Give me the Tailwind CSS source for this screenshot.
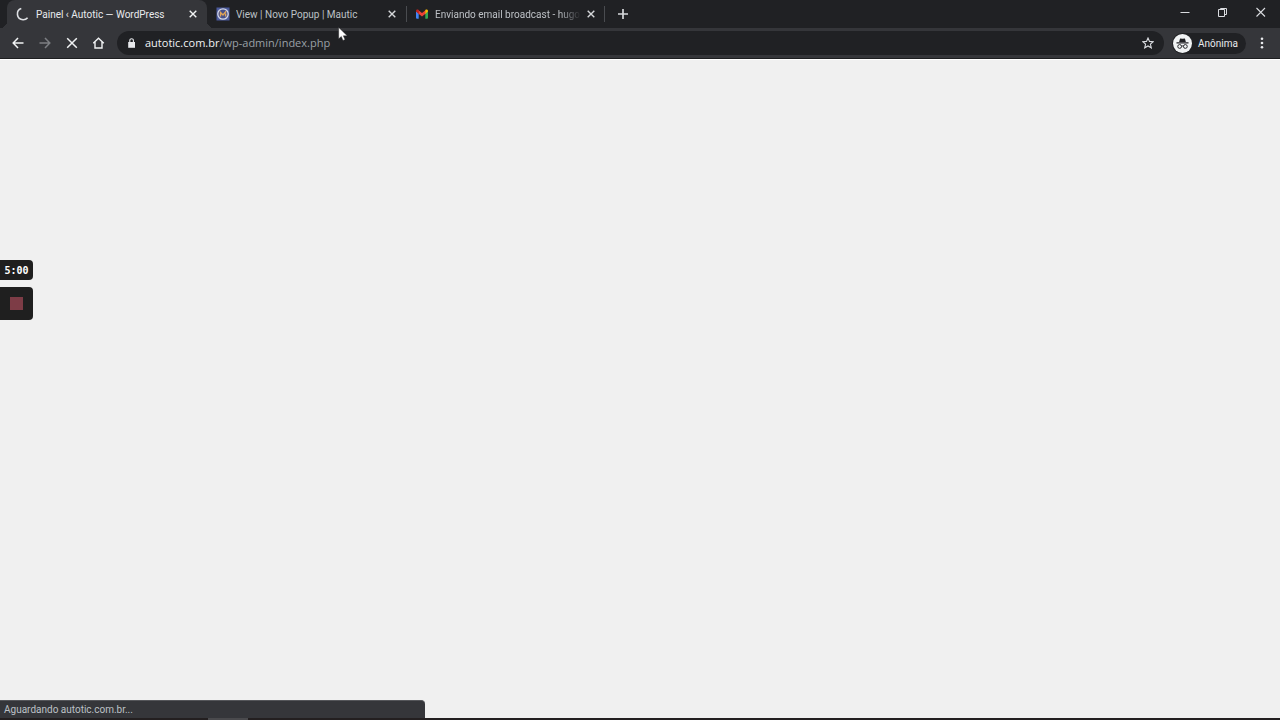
<!DOCTYPE html>
<html lang="pt-BR">
<head>
    <meta charset="UTF-8">
    <meta name="viewport" content="width=device-width, initial-scale=1.0">
    <title>Painel ‹ Autotic — WordPress</title>
    <script src="https://cdn.jsdelivr.net/npm/@tailwindcss/browser@4"></script>
</head>
<body class="relative flex h-screen flex-col overflow-hidden bg-[#f0f0f0] font-['Roboto',sans-serif] text-[10px] text-[#e8eaed]">

    <!-- Tab strip -->
    <header class="flex h-7 shrink-0 items-stretch bg-[#202124]">
        <nav class="flex pl-[7px]" aria-label="Guias">
            <div class="relative flex w-[200px] items-center rounded-t-lg bg-[#35363a] pr-2 pl-2">
                <span class="absolute bottom-0 -left-[7px] size-[7px] bg-[radial-gradient(circle_at_0_0,#202124_7px,#35363a_7px)]"></span>
                <span class="absolute -right-[7px] bottom-0 size-[7px] bg-[radial-gradient(circle_at_100%_0,#202124_7px,#35363a_7px)]"></span>
                <svg class="size-4 shrink-0" viewBox="0 0 16 16" fill="none" stroke="#dfe1e5" stroke-width="1.6"><path d="M6.3 2.6A5.7 5.7 0 0 0 8 13.7a5.7 5.7 0 0 0 4.6-2"/></svg>
                <a href="#" class="ml-[5px] min-w-0 flex-1 overflow-hidden whitespace-nowrap">Painel ‹ Autotic — WordPress</a>
                <button class="ml-1 grid size-3 place-items-center" aria-label="Fechar guia">
                    <svg class="size-3" viewBox="0 0 12 12" stroke="#f1f3f4" stroke-width="1.4"><path d="M2.7 2.7l6.6 6.6M9.3 2.7L2.7 9.3"/></svg>
                </button>
            </div>
            <div class="flex w-[199px] items-center pr-2 pl-2 text-[#bdc1c6]">
                <svg class="size-4 shrink-0" viewBox="0 0 16 16"><path fill="#4b5a9c" d="M1.5 1.5h13v13h-13z"/><circle cx="8" cy="8" r="5.2" fill="#46508a" stroke="#d5d8e8" stroke-width="1.3"/><path d="M5.5 10.5V6.5L8 9l3.2-3.8M10.6 7.5v3" fill="none" stroke="#e0a458" stroke-width="1.4"/></svg>
                <a href="#" class="ml-[5px] min-w-0 flex-1 overflow-hidden whitespace-nowrap">View | Novo Popup | Mautic</a>
                <button class="ml-1 grid size-3 place-items-center" aria-label="Fechar guia">
                    <svg class="size-3" viewBox="0 0 12 12" stroke="#d5d7da" stroke-width="1.4"><path d="M2.7 2.7l6.6 6.6M9.3 2.7L2.7 9.3"/></svg>
                </button>
            </div>
            <span class="h-4 w-px self-center bg-[#4a4c50]"></span>
            <div class="flex w-[197px] items-center pr-[7px] pl-[7px] text-[#bdc1c6]">
                <svg class="size-4 shrink-0" viewBox="0 0 16 16"><path fill="#4285f4" d="M2 5.2l2.7 2v5.6H3a1 1 0 0 1-1-1z"/><path fill="#34a853" d="M14 5.2l-2.7 2v5.6H13a1 1 0 0 0 1-1z"/><path fill="#ea4335" d="M4.2 4.1L8 7l3.8-2.9v3.4L8 10.4 4.2 7.5z"/><path fill="#c5221f" d="M2 5.5V5c0-1.4 1.4-2 2.7-1v3.9z"/><path fill="#fbbc04" d="M14 5.5V5c0-1.4-1.4-2-2.7-1v3.9z"/></svg>
                <a href="#" class="ml-[5px] min-w-0 flex-1 overflow-hidden mask-r-from-85% whitespace-nowrap">Enviando email broadcast - hugo</a>
                <button class="ml-1 grid size-3 place-items-center" aria-label="Fechar guia">
                    <svg class="size-3" viewBox="0 0 12 12" stroke="#d5d7da" stroke-width="1.4"><path d="M2.7 2.7l6.6 6.6M9.3 2.7L2.7 9.3"/></svg>
                </button>
            </div>
            <span class="h-4 w-px self-center bg-[#4a4c50]"></span>
        </nav>
        <button class="ml-3 grid w-3 place-items-center" aria-label="Nova guia">
            <svg class="size-3" viewBox="0 0 12 12" stroke="#d5d7da" stroke-width="1.7"><path d="M6 1v10M1 6h10"/></svg>
        </button>
        <div class="ml-auto flex">
            <button class="grid w-[38px] place-items-center pb-1" aria-label="Minimizar">
                <svg class="size-3" viewBox="0 0 12 12" stroke="#dadce0"><path d="M1.5 6.5h9"/></svg>
            </button>
            <button class="grid w-[38px] place-items-center pb-1" aria-label="Restaurar">
                <svg class="size-3" viewBox="0 0 12 12" fill="none" stroke="#dadce0"><path d="M1.5 3.5h6v7h-6zM3.5 3.5v-1h6v6h-2"/></svg>
            </button>
            <button class="grid w-[38px] place-items-center pb-1" aria-label="Fechar">
                <svg class="size-3" viewBox="0 0 12 12" stroke="#dadce0" stroke-width="1.1"><path d="M1.5 2l8.5 8.5M10 2l-8.5 8.5"/></svg>
            </button>
        </div>
    </header>

    <!-- Toolbar -->
    <div class="flex h-[31px] shrink-0 items-center border-b border-[#1d1e20] bg-[#35363a] pr-3 pl-3">
        <div class="flex gap-[15px]">
            <button class="size-3" aria-label="Voltar">
                <svg class="size-3" viewBox="0 0 12 12" fill="none" stroke="#f1f3f4" stroke-width="1.5"><path d="M11.5 6H1.5M6 1L1.2 6 6 11"/></svg>
            </button>
            <button class="size-3" aria-label="Avançar">
                <svg class="size-3" viewBox="0 0 12 12" fill="none" stroke="#7d7f83" stroke-width="1.5"><path d="M.5 6h10M6 1l4.8 5L6 11"/></svg>
            </button>
            <button class="size-3" aria-label="Parar">
                <svg class="size-3" viewBox="0 0 12 12" stroke="#f1f3f4" stroke-width="1.5"><path d="M1.2 1.2l9.6 9.6M10.8 1.2l-9.6 9.6"/></svg>
            </button>
            <button class="size-3" aria-label="Página inicial">
                <svg class="size-3" viewBox="0 0 12 12" fill="none" stroke="#f1f3f4" stroke-width="1.4"><path d="M.2 6.3L5.5 1.2l5.3 5.1M2 5v6h7V5"/></svg>
            </button>
        </div>
        <div class="ml-3 flex h-6 flex-1 items-center rounded-full bg-[#202124] pr-[10px] pl-[10px]">
            <svg class="size-[10px] shrink-0" viewBox="0 0 10 10"><path fill="#e8eaed" d="M1.2 4h6.8v5.8H1.2z"/><path d="M2.8 4.2V2.5a1.8 1.8 0 0 1 3.6 0v1.7" fill="none" stroke="#e8eaed" stroke-width="1.1"/></svg>
            <a href="#" class="ml-2 flex-1 font-['Open_Sans',sans-serif] text-[11px] whitespace-nowrap text-[#9aa0a6]"><span class="text-[#f1f3f4]">autotic.com.br</span>/wp-admin/index.php</a>
            <button aria-label="Adicionar aos favoritos">
                <svg class="size-3" viewBox="0 0 12 12" fill="none" stroke="#dadce0" stroke-width="1.1"><path d="M6 1l1.5 3.4 3.7.3-2.8 2.5.9 3.6L6 8.9l-3.3 1.9.9-3.6L.8 4.7l3.7-.3z"/></svg>
            </button>
        </div>
        <button class="ml-2 flex h-[21px] items-center gap-[6px] rounded-full bg-[#202124] pr-2 pl-px">
            <svg class="size-[19px]" viewBox="0 0 18 18"><circle cx="9" cy="9" r="9" fill="#f1f3f4"/><path fill="#202124" d="M6.7 4.2l2.3.4 2.3-.4.9 3.3H5.8zM3.3 7.9h11.4v1H3.3z"/><g fill="none" stroke="#202124" stroke-width=".9"><circle cx="6.3" cy="11.8" r="1.8"/><circle cx="11.7" cy="11.8" r="1.8"/><path d="M8.1 11.6q.9-.6 1.8 0"/></g></svg>
            Anônima
        </button>
        <button class="ml-[10px] grid size-3 place-items-center" aria-label="Menu">
            <svg class="size-3" viewBox="0 0 12 12" fill="#e8eaed"><circle cx="6" cy="1.7" r="1.3"/><circle cx="6" cy="6" r="1.3"/><circle cx="6" cy="10.3" r="1.3"/></svg>
        </button>
    </div>

    <main class="flex-1 border-t border-white"></main>
    <div class="h-[2px] shrink-0 bg-[#231f20]">
        <div class="ml-52 h-full w-10 bg-[#4a4a4d]"></div>
    </div>

    <!-- Screen recorder controls -->
    <aside class="absolute top-[260px] left-0 flex w-[33px] flex-col gap-[7px]">
        <time class="flex h-5 items-center justify-center rounded-r bg-[#1f1f1f] font-['DejaVu_Sans_Mono',monospace] font-bold text-white">5:00</time>
        <button class="grid h-[33px] place-items-center rounded-r bg-[#1f1f1f]" aria-label="Parar gravação">
            <span class="size-[13px] bg-[#7d3c46]"></span>
        </button>
    </aside>

    <!-- Status bubble -->
    <div class="absolute bottom-[2px] left-0 flex h-[18px] w-[425px] items-center rounded-tr-sm border-t border-[#55565a] bg-[#35363a] pl-1 text-[#bdc1c6]">Aguardando autotic.com.br...</div>

    <!-- Mouse pointer -->
    <svg class="absolute top-[27px] left-[338px] h-[14px] w-[10px]" viewBox="0 0 10 14"><path fill="#fff" stroke="#202124" stroke-width=".4" d="M.7.4v11.4l2.6-2.4 1.7 4 2-.8-1.7-3.8h3.9z"/></svg>
</body>
</html>
